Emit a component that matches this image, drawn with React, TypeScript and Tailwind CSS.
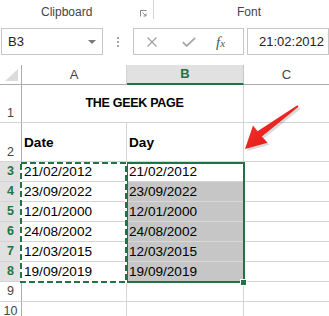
import React from "react";

const dates = ["21/02/2012", "23/09/2022", "12/01/2000", "24/08/2002", "12/03/2015", "19/09/2019"];

export default function App() {
  const font = { fontFamily: '"Liberation Sans", Arial, sans-serif' };
  return (
    <div className="relative w-[329px] h-[316px] overflow-hidden bg-white" style={font}>
      {/* Ribbon group labels */}
      <div className="flex h-[22px] items-start text-[12px] text-[#444]">
        <div className="flex w-[153px] items-center pl-[41px] pt-[3px]">
          <span>Clipboard</span>
          <svg className="ml-auto mr-[6px] mt-[3px]" width="7" height="7" viewBox="0 0 7 7">
            <path d="M0.5 6.5V0.5H6.5" stroke="#8a8a8a" strokeWidth="1" fill="none" />
            <path d="M2.5 2.5L6 6M6 3.5V6H3.5" stroke="#8a8a8a" strokeWidth="1" fill="none" />
          </svg>
        </div>
        <div className="h-[19px] w-px bg-[#d4d4d4]" />
        <div className="pl-[83px] pt-[3px]">Font</div>
      </div>

      {/* Formula bar */}
      <div className="mt-[6px] flex h-[27px] items-stretch">
        <div className="ml-[1px] flex w-[102px] items-center border border-[#c6c6c6] pl-[6px] pr-[6px] text-[13px] text-[#222]">
          <span>B3</span>
          <svg className="ml-auto" width="8" height="4" viewBox="0 0 8 4">
            <path d="M0 0H8L4 4Z" fill="#7a7a7a" />
          </svg>
        </div>
        <div className="flex w-[30px] flex-col items-center justify-center gap-[2px]">
          <span className="block h-[2px] w-[2px] bg-[#a6a6a6]" />
          <span className="block h-[2px] w-[2px] bg-[#a6a6a6]" />
          <span className="block h-[2px] w-[2px] bg-[#a6a6a6]" />
        </div>
        <div className="flex w-[111px] items-center border border-[#c6c6c6]">
          <svg className="ml-[13px]" width="10" height="10" viewBox="0 0 10 10">
            <path d="M0.5 0.5L9.5 9.5M9.5 0.5L0.5 9.5" stroke="#a0a0a0" strokeWidth="1.2" />
          </svg>
          <svg className="ml-[25px]" width="14" height="10" viewBox="0 0 14 10">
            <path d="M0.8 5.2L4.6 9L13.2 0.8" stroke="#a8a8a8" strokeWidth="1.8" fill="none" />
          </svg>
          <span
            className="ml-[20px] text-[#555] italic"
            style={{ fontFamily: '"Liberation Serif", "Times New Roman", serif' }}
          >
            <span className="text-[15px]">f</span>
            <span className="text-[11px]">x</span>
          </span>
        </div>
        <div className="ml-[3px] flex flex-1 items-center border border-[#c6c6c6] pl-[11px] text-[13px] text-[#222]">
          21:02:2012
        </div>
      </div>

      {/* Sheet grid */}
      <div className="relative mt-[10px] grid grid-cols-[22px_105px_117px_1fr] grid-rows-[20px_38px_39px_repeat(8,20px)] text-[13.6px] text-black">
        {/* header row */}
        <div className="relative border-b border-r border-[#ababab] bg-white">
          <svg className="absolute left-[5px] top-[4px]" width="13" height="12" viewBox="0 0 13 12">
            <path d="M13 0V12H0Z" fill="#dcdcdc" />
          </svg>
        </div>
        <div className="flex items-center justify-center border-b border-r border-b-[#ababab] border-r-[#d4d4d4] text-[13px] text-[#444]">A</div>
        <div className="flex items-center justify-center border-b-2 border-r border-b-[#217346] border-r-[#c6c6c6] bg-[#e1e1e1] text-[13px] font-bold text-[#217346]">B</div>
        <div className="flex items-center justify-center border-b border-b-[#ababab] text-[13px] text-[#444]">C</div>

        {/* row 1 */}
        <div className="flex items-end justify-center border-b border-r border-b-[#d4d4d4] border-r-[#ababab] pb-[3px] text-[12.5px] leading-none text-[#444]">1</div>
        <div className="col-span-2 flex items-center justify-center border-b border-r border-[#d4d4d4] pl-[4px] text-[12.5px] font-bold tracking-[-0.3px]">THE GEEK PAGE</div>
        <div className="border-b border-[#d4d4d4]" />

        {/* row 2 */}
        <div className="flex items-end justify-center border-b border-r border-b-[#d4d4d4] border-r-[#ababab] pb-[3px] text-[12.5px] leading-none text-[#444]">2</div>
        <div className="flex items-center border-b border-r border-[#d4d4d4] pl-[2px] pt-[2px] font-bold">Date</div>
        <div className="flex items-center border-b border-r border-[#d4d4d4] pl-[2px] pt-[2px] font-bold">Day</div>
        <div className="border-b border-[#d4d4d4]" />

        {dates.map((d, i) => (
          <React.Fragment key={d}>
            <div className="flex items-end justify-center border-b border-r border-b-[#d4d4d4] border-r-[#ababab] bg-[#e1e1e1] pb-[4px] text-[12.5px] font-bold leading-none text-[#217346]">
              {i + 3}
            </div>
            <div className="flex items-center border-b border-r border-[#d4d4d4] pl-[2px] pt-[2px]">{d}</div>
            <div
              className={
                i === 0
                  ? "flex items-center border-b border-r border-[#d4d4d4] pl-[2px] pt-[2px]"
                  : "flex items-center border-b border-r border-[#d9d9d9] bg-[#c6c6c6] pl-[2px] pt-[2px]"
              }
            >
              {d}
            </div>
            <div className="border-b border-[#d4d4d4]" />
          </React.Fragment>
        ))}

        {[9, 10].map((n) => (
          <React.Fragment key={n}>
            <div className="flex items-end justify-center border-b border-r border-b-[#d4d4d4] border-r-[#ababab] pb-[4px] text-[12.5px] leading-none text-[#444]">
              {n}
            </div>
            <div className="border-b border-r border-[#d4d4d4]" />
            <div className="border-b border-r border-[#d4d4d4]" />
            <div className="border-b border-[#d4d4d4]" />
          </React.Fragment>
        ))}

        {/* selection B3:B8 */}
        <div className="pointer-events-none absolute left-[126px] top-[97px] h-[121px] w-[119px] border-2 border-[#217346]" />
        {/* marching ants A3:A8 */}
        <svg className="pointer-events-none absolute left-0 top-0" width="329" height="251">
          <rect x="21" y="98" width="105" height="119" fill="none" stroke="#ffffff" strokeWidth="2" />
          <rect x="21" y="98" width="105" height="119" fill="none" stroke="#217346" strokeWidth="2" strokeDasharray="6 3" />
        </svg>
        {/* fill handle */}
        <div className="pointer-events-none absolute left-[240px] top-[214px] h-[7px] w-[7px] border border-white bg-[#217346]" />
      </div>

      {/* red arrow */}
      <svg className="pointer-events-none absolute left-0 top-0" width="329" height="316">
        <defs>
          <linearGradient id="rg" x1="0" y1="0" x2="1" y2="1">
            <stop offset="0" stopColor="#ff3a30" />
            <stop offset="1" stopColor="#d40f12" />
          </linearGradient>
        </defs>
        <polygon
          points="247,151 255,127.5 259.5,133.2 299.4,107.2 300.6,108.8 263.8,138.5 269.5,144.8"
          fill="#000"
          opacity="0.15"
        />
        <polygon
          points="245,149 253,125.5 257.5,131.2 297.4,105.2 298.6,106.8 261.8,136.5 267.5,142.8"
          fill="url(#rg)"
        />
      </svg>
    </div>
  );
}
